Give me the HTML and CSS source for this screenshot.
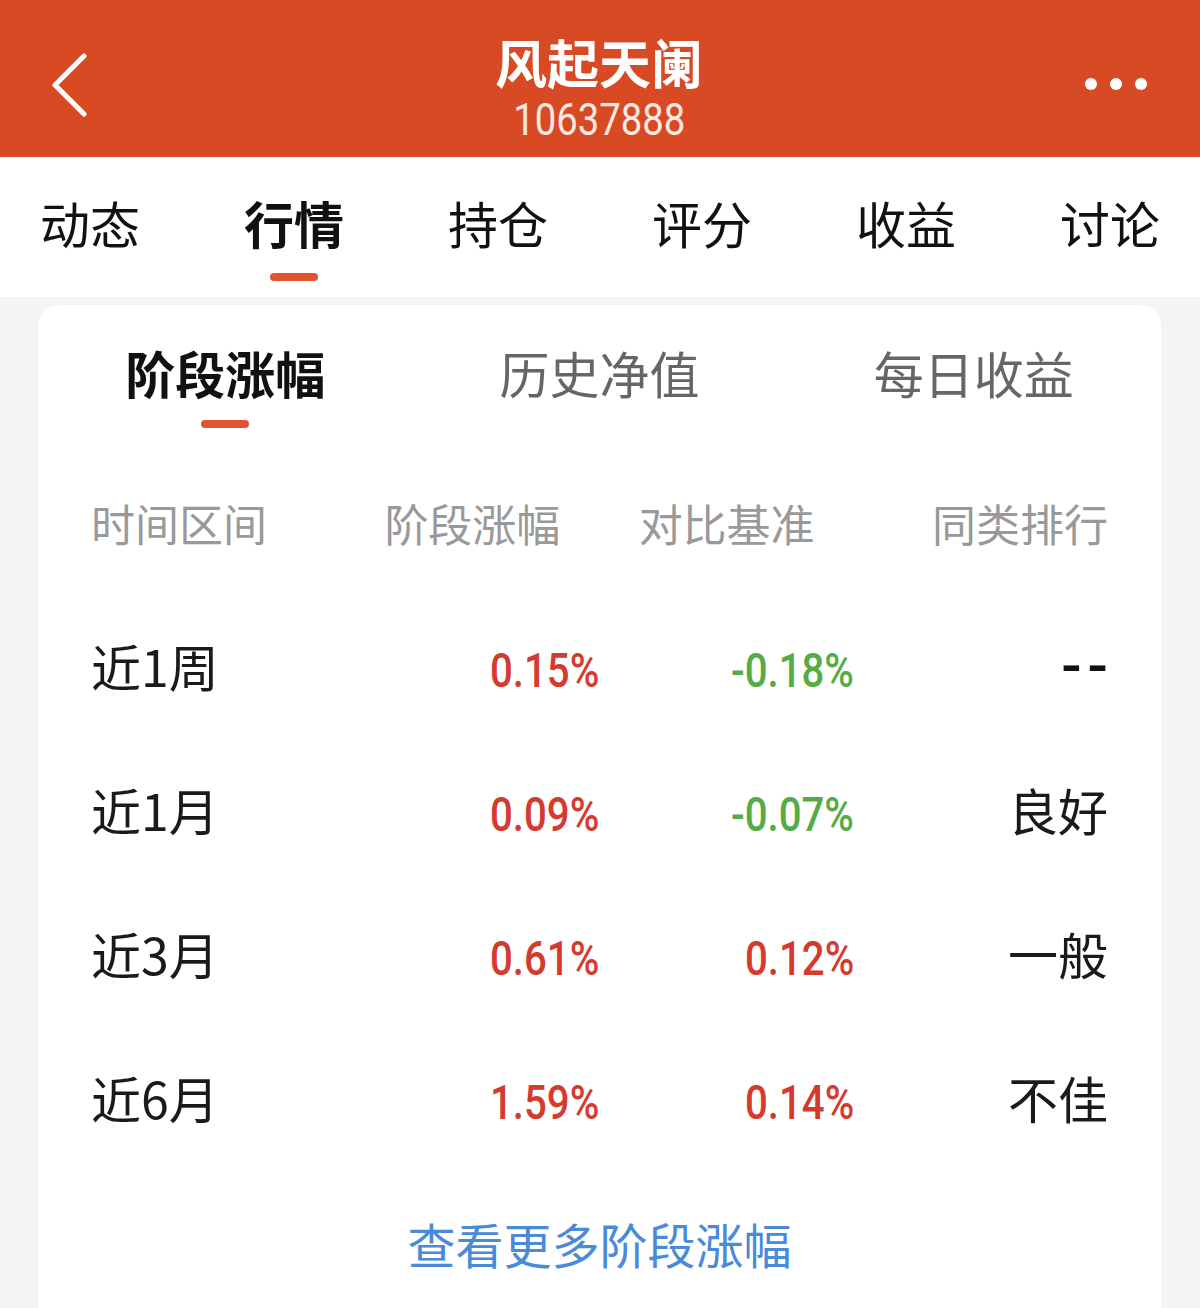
FILE: index.html
```html
<!DOCTYPE html>
<html>
<head>
    <meta charset="utf-8">
    <title>风起天阑</title>
    <link rel="stylesheet" href="styles.css">
</head>
<body>
<header class="topbar">
    <svg class="back" width="40" height="64" viewBox="0 0 40 64">
        <polyline points="34,3 5,32 34,61" fill="none" stroke="#fff" stroke-width="5" stroke-linecap="round" stroke-linejoin="round"/>
    </svg>
    <div class="title">
        <div class="name">风起天阑</div>
        <div class="code"><span>10637888</span></div>
    </div>
    <svg class="more-dots" width="64" height="16" viewBox="0 0 64 16">
        <circle cx="7" cy="8" r="6" fill="#fff"/>
        <circle cx="32" cy="8" r="6" fill="#fff"/>
        <circle cx="57" cy="8" r="6" fill="#fff"/>
    </svg>
</header>

<nav class="tabs">
    <div class="tab">动态<i></i></div>
    <div class="tab active">行情<i></i></div>
    <div class="tab">持仓<i></i></div>
    <div class="tab">评分<i></i></div>
    <div class="tab">收益<i></i></div>
    <div class="tab">讨论<i></i></div>
</nav>

<main class="page">
    <section class="card">
        <div class="seg">
            <div class="seg-item active">阶段涨幅<i></i></div>
            <div class="seg-item">历史净值<i></i></div>
            <div class="seg-item">每日收益<i></i></div>
        </div>

        <div class="table">
            <div class="row head">
                <span class="c1">时间区间</span>
                <span class="c2">阶段涨幅</span>
                <span class="c3">对比基准</span>
                <span class="c4">同类排行</span>
            </div>
            <div class="row">
                <span class="c1">近1周</span>
                <span class="c2"><b class="num up">0.15%</b></span>
                <span class="c3"><b class="num down">-0.18%</b></span>
                <span class="c4 dash">--</span>
            </div>
            <div class="row">
                <span class="c1">近1月</span>
                <span class="c2"><b class="num up">0.09%</b></span>
                <span class="c3"><b class="num down">-0.07%</b></span>
                <span class="c4">良好</span>
            </div>
            <div class="row">
                <span class="c1">近3月</span>
                <span class="c2"><b class="num up">0.61%</b></span>
                <span class="c3"><b class="num up">0.12%</b></span>
                <span class="c4">一般</span>
            </div>
            <div class="row">
                <span class="c1">近6月</span>
                <span class="c2"><b class="num up">1.59%</b></span>
                <span class="c3"><b class="num up">0.14%</b></span>
                <span class="c4">不佳</span>
            </div>
        </div>

        <a class="more" href="#">查看更多阶段涨幅</a>
    </section>
</main>
</body>
</html>
```

FILE: styles.css
```css
body {
    margin: 0;
    padding: 0;
    font-family: "Noto Sans CJK SC", "Noto Sans", sans-serif;
    background-color: #f4f4f4;
    color: #1a1a1a;
}

.topbar {
    height: 157px;
    background-color: #d84a24;
    display: grid;
    grid-template-columns: 1fr auto 1fr;
    align-items: center;
    padding: 0 52px 0 50px;
    box-sizing: border-box;
}

.back {
    display: block;
    margin-top: 13px;
    justify-self: start;
}

.more-dots {
    display: block;
    margin-top: 10px;
    justify-self: end;
}

.title {
    align-self: start;
    padding-top: 32px;
    text-align: center;
    color: #fff;
}

.title .name {
    font-size: 52px;
    font-weight: 700;
    line-height: 60px;
}

.title .code {
    font-family: Roboto, "Noto Sans", sans-serif;
    font-size: 45px;
    line-height: 40px;
    margin-top: 8px;
    color: #fbe9e3;
}

.title .code span {
    display: inline-block;
    transform: scaleX(0.85);
}

.tabs {
    display: flex;
    justify-content: space-between;
    padding: 36px 40px 16px;
    background-color: #fff;
}

.tab {
    display: flex;
    flex-direction: column;
    align-items: center;
    font-size: 50px;
    line-height: 58px;
    color: #111;
}

.tab i, .seg-item i {
    display: block;
    width: 48px;
    height: 8px;
    border-radius: 4px;
    margin-top: 22px;
}

.tab.active {
    font-weight: 700;
}

.tab.active i {
    background-color: #e05530;
}

.page {
    padding: 8px 39px 0 38px;
}

.card {
    background-color: #fff;
    border-radius: 20px 20px 0 0;
    padding: 37px 53px 40px;
}

.seg {
    display: flex;
    margin: 0 -53px;
}

.seg-item {
    flex: 1;
    display: flex;
    flex-direction: column;
    align-items: center;
    font-size: 50px;
    line-height: 60px;
    color: #666;
}

.seg-item i {
    margin-top: 18px;
}

.seg-item.active {
    color: #111;
    font-weight: 700;
}

.seg-item.active i {
    background-color: #e05530;
}

.table {
    margin-top: 25px;
}

.row {
    display: grid;
    grid-template-columns: repeat(4, 1fr);
    align-items: center;
    height: 144px;
    font-size: 50px;
    color: #1a1a1a;
}

.row.head {
    height: 140px;
    font-size: 44px;
    color: #999;
}

.c1 {
    text-align: left;
}

.c2, .c3, .c4 {
    text-align: right;
}

.row.head .c2, .row.head .c3 {
    text-align: center;
}

.num {
    display: inline-block;
    font-family: Roboto, "Noto Sans", sans-serif;
    font-weight: 500;
    font-size: 49px;
    transform: scaleX(0.82);
    transform-origin: right center;
}

.up {
    color: #d53a2f;
}

.down {
    color: #55ab45;
}

.dash {
    font-family: Roboto, sans-serif;
    font-size: 60px;
    font-weight: 500;
    letter-spacing: 6px;
    margin-right: -6px;
    color: #111;
}

.more {
    display: block;
    text-align: center;
    margin-top: 46px;
    font-size: 48px;
    line-height: 56px;
    color: #4a8ad8;
    text-decoration: none;
}
```
